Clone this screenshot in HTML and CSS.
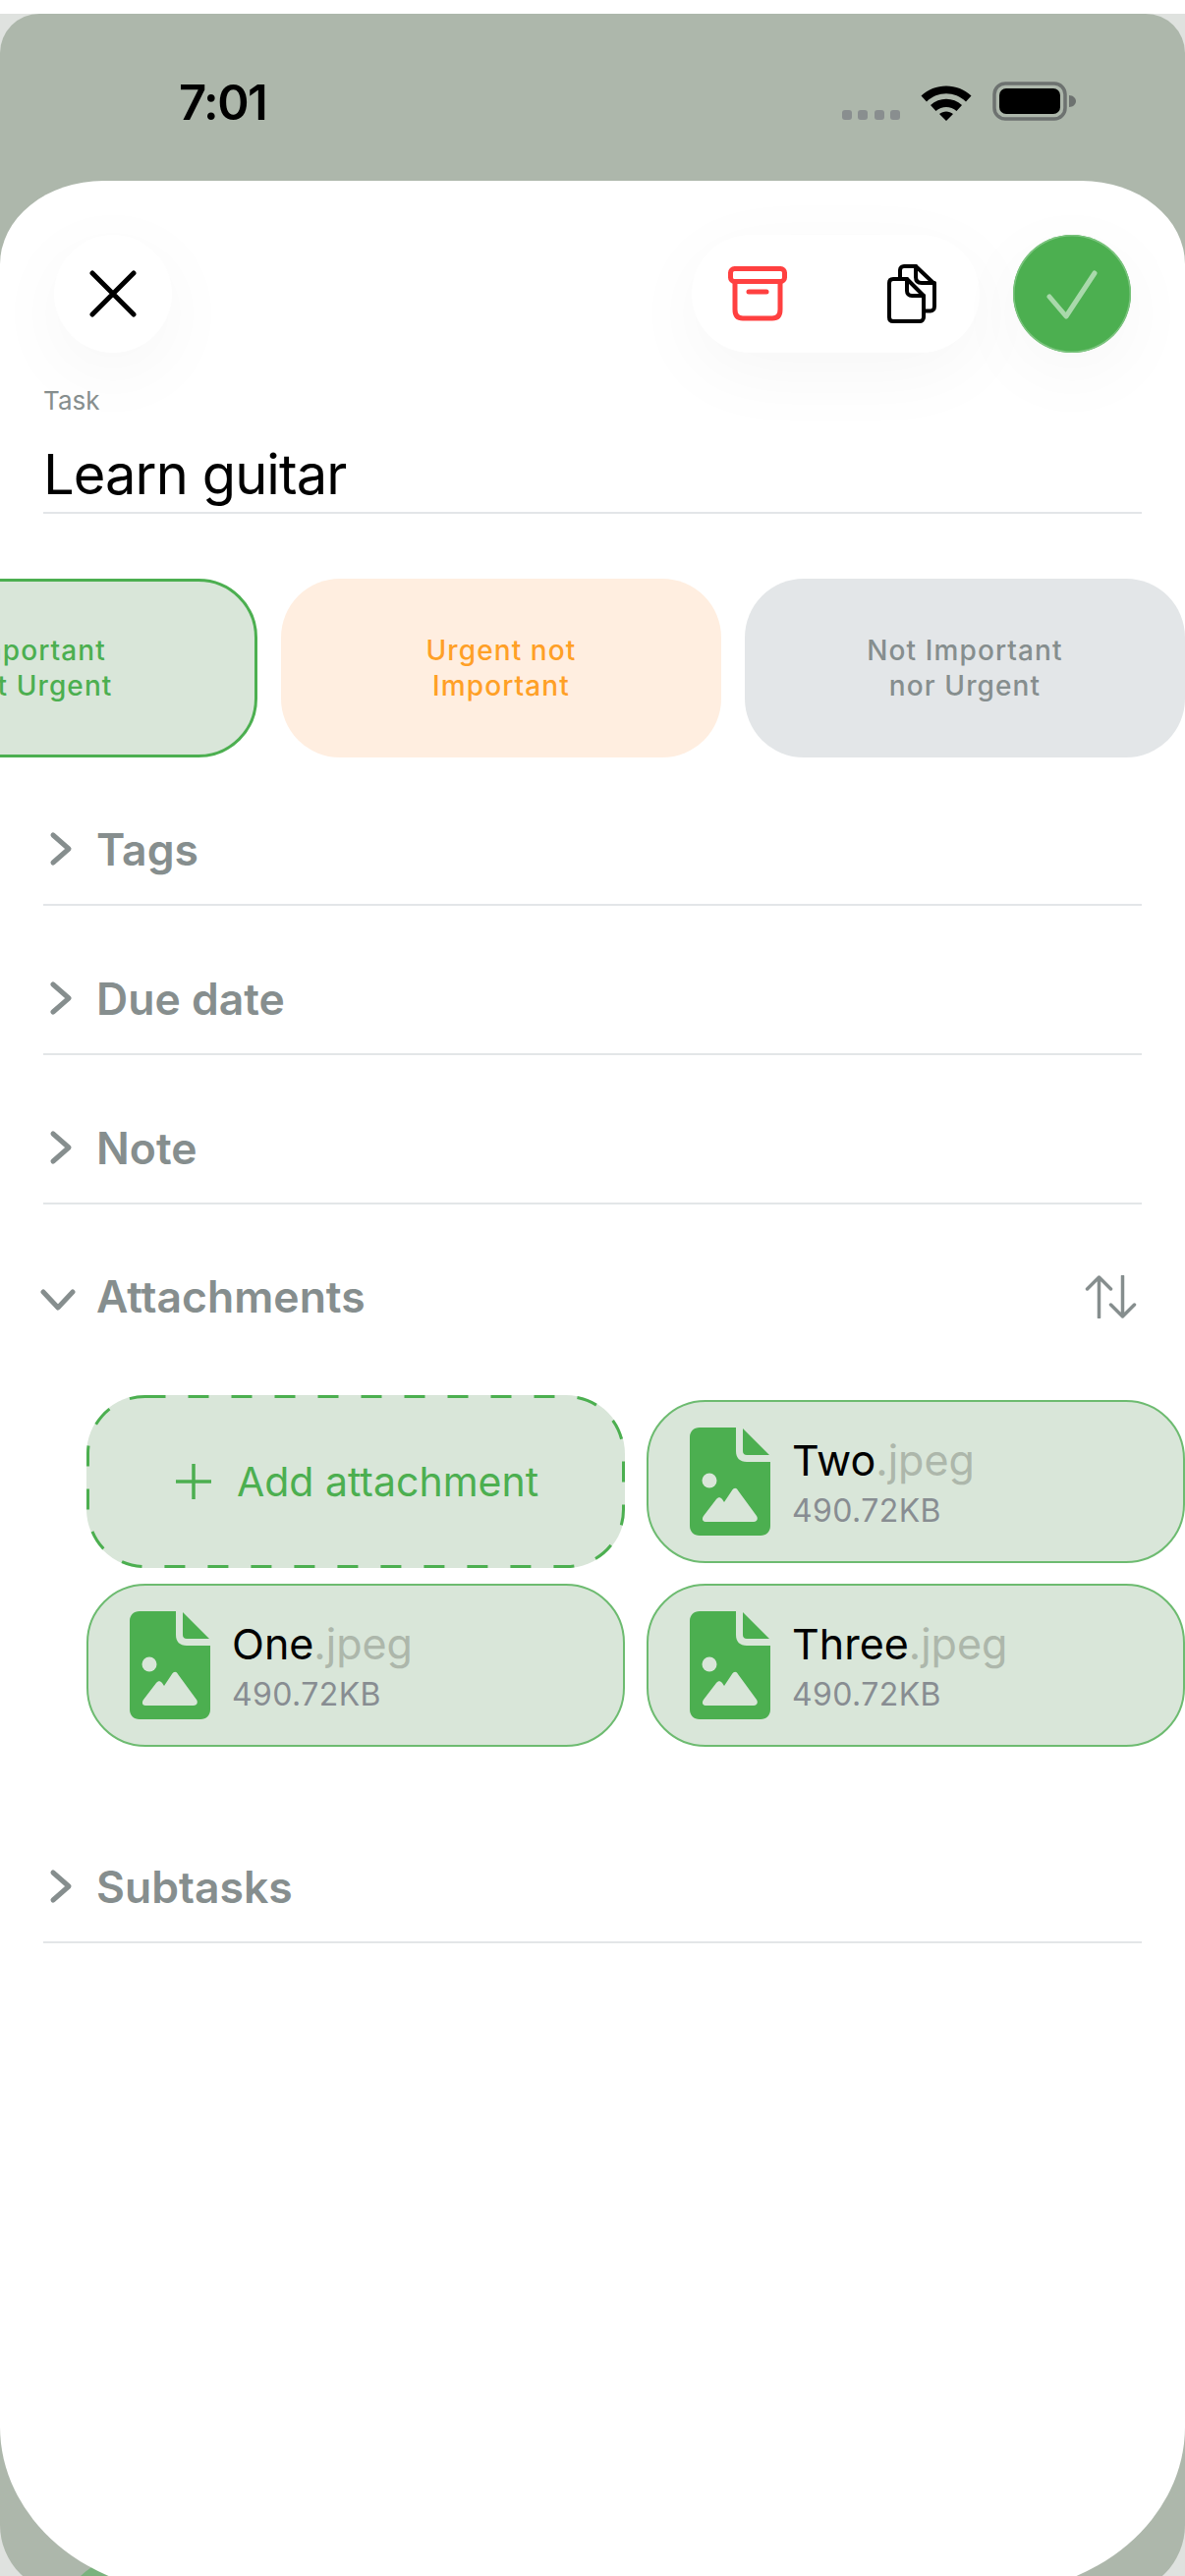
FILE: index.html
```html
<!DOCTYPE html>
<html lang="en">
<head>
<meta charset="utf-8">
<title>Task</title>
<link rel="stylesheet" href="styles.css">
</head>
<body>
<div class="frame">
  <div class="phone">
    <header class="status">
      <span class="time">7:01</span>
      <div class="status-icons">
        <div class="signal"><i></i><i></i><i></i><i></i></div>
        <svg class="wifi" viewBox="0 0 52 40"><path d="M0.5 14.5 C14 1 38 1 51.5 14.5 L46 20.5 C35 9.5 17 9.500 6 20.500 Z M10 24 C19 15.500 33 15.500 42 24 L36.500 30 C30.500 24.500 21.500 24.500 15.500 30 Z M19 33 C23 29.500 29 29.500 33 33 L26 40 Z" fill="#000"/></svg>
        <svg class="battery" viewBox="0 0 85 40"><rect x="2" y="2" width="72" height="36" rx="11" fill="none" stroke="#6d7270" stroke-width="3.500"/><rect x="7" y="7" width="62" height="26" rx="7" fill="#000"/><path d="M78 14 C82 14 85 17 85 20 C85 23 82 26 78 26 Z" fill="#6d7270"/></svg>
      </div>
    </header>
    <div class="peek"></div>
    <main class="sheet">
      <div class="toolbar">
        <button class="round close" aria-label="Close">
          <svg class="icon-x" viewBox="0 0 48 48"><path d="M3 3 L45 45 M45 3 L3 45" stroke="#000" stroke-width="5" stroke-linecap="round" fill="none"/></svg>
        </button>
        <div class="toolbar-right">
          <div class="actions">
            <svg class="icon-archive" viewBox="0 0 60 56"><g fill="none" stroke="#ff4040" stroke-width="5" stroke-linejoin="round" stroke-linecap="round"><rect x="2.500" y="2.500" width="55" height="13" rx="4"/><path d="M7 16 V44 C7 50 10 53 15 53 H45 C50 53 53 50 53 44 V16"/><path d="M21 26 H39"/></g></svg>
            <svg class="icon-copy" viewBox="0 0 50 60"><g fill="none" stroke="#000" stroke-width="4" stroke-linejoin="round" stroke-linecap="round"><path d="M13 14 V6 C13 3.500 15 2 17 2 H29 L48 20 V43 C48 46 46 47.500 44 47.500 H37"/><path d="M29 2 V13 C29 17 31 19 35 19 H48"/><path d="M6 15 H20 L37 32 V54 C37 56.500 35 58 33 58 H6 C3.500 58 2 56.500 2 54 V19 C2 16.500 3.500 15 6 15 Z" fill="#fff"/><path d="M20 15 V27 C20 30 22 32 25 32 H37"/></g></svg>
          </div>
          <button class="round confirm" aria-label="Done">
            <svg class="icon-check" viewBox="0 0 52 50"><path d="M3 27 L20 47 L49 3" stroke="#a9d9ab" stroke-width="5" stroke-linecap="round" stroke-linejoin="round" fill="none"/></svg>
          </button>
        </div>
      </div>

      <div class="field">
        <div class="field-label">Task</div>
        <div class="field-value">Learn guitar</div>
      </div>

      <div class="chips">
        <div class="chip chip-green">Important<br>not Urgent</div>
        <div class="chip chip-orange">Urgent not<br>Important</div>
        <div class="chip chip-grey">Not Important<br>nor Urgent</div>
      </div>

      <div class="row">
        <svg class="chev" viewBox="0 0 24 36"><path d="M4 4 L20 18 L4 32" /></svg>
        <span class="row-title">Tags</span>
      </div>
      <div class="row">
        <svg class="chev" viewBox="0 0 24 36"><path d="M4 4 L20 18 L4 32" /></svg>
        <span class="row-title">Due date</span>
      </div>
      <div class="row">
        <svg class="chev" viewBox="0 0 24 36"><path d="M4 4 L20 18 L4 32" /></svg>
        <span class="row-title">Note</span>
      </div>
      <div class="row row-open">
        <svg class="chev-down" viewBox="0 0 36 22"><path d="M3 3 L18 19 L33 3" /></svg>
        <span class="row-title">Attachments</span>
        <svg class="sort" viewBox="1 0 50 44"><g fill="none" stroke="#868e8e" stroke-width="3.500" stroke-linecap="round" stroke-linejoin="round"><path d="M14 43 V2 M2 14 L14 2 L26 14"/><path d="M38 1 V42 M26 30 L38 42 L50 30"/></g></svg>
      </div>

      <div class="tiles">
        <div class="tile tile-add">
          <svg class="dash" viewBox="0 0 548 176" preserveAspectRatio="none"><rect x="1.500" y="1.500" width="545" height="173" rx="58" fill="none" stroke="#4caf50" stroke-width="3" stroke-dasharray="21 23"/></svg>
          <svg class="plus" viewBox="0 0 36 36"><path d="M18 0 V36 M0 18 H36" stroke="#4caf50" stroke-width="3.500"/></svg>
          <span class="add-label">Add attachment</span>
        </div>
        <div class="tile">
          <svg class="file" viewBox="0 0 82 110"><use href="#file-icon"/></svg>
          <div class="file-text"><div class="file-name">Two<span class="ext">.jpeg</span></div><div class="file-size">490.72KB</div></div>
        </div>
        <div class="tile">
          <svg class="file" viewBox="0 0 82 110"><use href="#file-icon"/></svg>
          <div class="file-text"><div class="file-name">One<span class="ext">.jpeg</span></div><div class="file-size">490.72KB</div></div>
        </div>
        <div class="tile">
          <svg class="file" viewBox="0 0 82 110"><use href="#file-icon"/></svg>
          <div class="file-text"><div class="file-name">Three<span class="ext">.jpeg</span></div><div class="file-size">490.72KB</div></div>
        </div>
      </div>

      <div class="row row-subtasks">
        <svg class="chev" viewBox="0 0 24 36"><path d="M4 4 L20 18 L4 32" /></svg>
        <span class="row-title">Subtasks</span>
      </div>
    </main>
  </div>
</div>
<svg class="defs" width="0" height="0">
  <defs>
    <g id="file-icon">
      <path d="M10 0 H47 V24 C47 31 51 35 58 35 H82 V100 C82 106 78 110 72 110 H10 C4 110 0 106 0 100 V10 C0 4 4 0 10 0 Z" fill="#4caf50"/>
      <path d="M54 1 L81 28 H58 C55.500 28 54 26.500 54 24 Z" fill="#4caf50"/>
      <circle cx="20" cy="54" r="7.500" fill="#d9e6d9"/>
      <path d="M14 90 L27 73 C29 70.500 31 70.500 33 73 L35 76 L43 64 C45 61 47.500 61 49 64 L68 90 C70 93 68 96 65 96 H16 C13 96 12 93 14 90 Z" fill="#d9e6d9"/>
    </g>
  </defs>
</svg>
</body>
</html>
```

FILE: styles.css
```css
* { box-sizing: border-box; }

html, body {
  margin: 0;
  height: 2622px;
  overflow: hidden;
  background: #fff;
  font-family: Inter, "Liberation Sans", sans-serif;
}

.defs { position: absolute; }

.frame {
  margin-top: 14px;
  height: 2626px;
  background: #dfe2df;
}

.phone {
  position: relative;
  display: flex;
  flex-direction: column;
  height: 2626px;
  background: #adb7ab;
  border-radius: 40px 40px 70px 70px;
}

.status {
  height: 170px;
  flex: none;
  display: flex;
  justify-content: space-between;
  align-items: flex-start;
  padding: 69px 111px 0 182px;
}

.time {
  font-size: 49px;
  line-height: 44px;
  font-weight: 600;
  color: #000;
  letter-spacing: -1.5px;
}

.status-icons {
  display: flex;
  align-items: flex-end;
}

.signal {
  display: flex;
  gap: 6.500px;
  margin-bottom: 1px;
  margin-right: 21px;
}

.signal i {
  width: 10px;
  height: 10px;
  border-radius: 3px;
  background: #898e8f;
}

.wifi { width: 52px; height: 40px; display: block; margin-right: 21px; }
.battery { width: 85px; height: 40px; display: block; }

.peek {
  position: absolute;
  left: 63px;
  top: 2589px;
  width: 130px;
  height: 130px;
  border-radius: 50%;
  background: #7ab27d;
}

.sheet {
  position: relative;
  flex: 1;
  background: #fff;
  border-radius: 105px 105px 200px 200px / 85px 85px 170px 170px;
}

.toolbar {
  display: flex;
  justify-content: space-between;
  padding: 55px 55px 0;
}

.toolbar-right {
  display: flex;
  gap: 34px;
}

.round {
  width: 120px;
  height: 120px;
  padding: 0;
  border: 0;
  border-radius: 50%;
  display: flex;
  align-items: center;
  justify-content: center;
  box-shadow: 0 20px 80px rgba(0, 0, 0, 0.04);
}

.close { background: #fff; }
.confirm {
  background: #4caf50;
  box-shadow: inset 0 0 0 1.5px #7cc47f, 0 20px 80px rgba(0, 0, 0, 0.04);
}

.icon-x { width: 48px; height: 48px; }
.icon-check { width: 52px; height: 50px; margin-top: 2px; }

.actions {
  width: 293px;
  height: 120px;
  border-radius: 60px;
  background: #fff;
  box-shadow: 0 20px 80px rgba(0, 0, 0, 0.04);
  display: flex;
  align-items: center;
  padding-left: 37px;
  gap: 102px;
}

.icon-archive { width: 60px; height: 56px; }
.icon-copy { width: 50px; height: 60px; }

.field {
  margin: 33px 44px 0;
  border-bottom: 2px solid #e3e6e8;
  height: 131px;
}

.field-label {
  font-size: 26px;
  line-height: 32px;
  color: #868e8e;
}

.field-value {
  font-size: 56px;
  line-height: 68px;
  margin-top: 25px;
  color: #000;
  letter-spacing: -0.9px;
}

.chips {
  display: flex;
  gap: 24px;
  margin: 66px 0 -1px -186px;
}

.chip {
  flex: none;
  width: 448px;
  height: 182px;
  border-radius: 60px;
  display: flex;
  align-items: center;
  justify-content: center;
  text-align: center;
  font-size: 28px;
  line-height: 36px;
  font-weight: 500;
  letter-spacing: 1.1px;
}

.chip-green { background: #d9e6d9; color: #4caf50; border: 3px solid #4caf50; }
.chip-orange { background: #ffeee0; color: #ffa026; }
.chip-grey { background: #e3e6e8; color: #868e8e; }

.row {
  position: relative;
  height: 152px;
  margin: 0 44px;
  border-bottom: 2px solid #e3e6e8;
  display: flex;
  align-items: flex-end;
  padding-bottom: 31px;
  color: #868e8e;
}

.row-title {
  font-size: 44.5px;
  line-height: 48px;
  font-weight: 600;
  margin-left: 54px;
}

.chev {
  position: absolute;
  left: 6px;
  bottom: 38px;
  width: 24px;
  height: 36px;
}

.chev path, .chev-down path {
  fill: none;
  stroke: #868e8e;
  stroke-width: 5;
  stroke-linecap: round;
  stroke-linejoin: round;
}

.row-open { border-bottom: 0; height: 118px; padding-bottom: 0; }

.chev-down {
  position: absolute;
  left: -3px;
  bottom: 10px;
  width: 36px;
  height: 22px;
}

.sort {
  position: absolute;
  right: 5px;
  bottom: 2px;
  width: 53px;
  height: 44px;
}

.tiles {
  display: grid;
  grid-template-columns: 548px 548px;
  grid-auto-rows: 166px;
  gap: 21px 22px;
  margin: 81px 0 0 88px;
}

.tile {
  position: relative;
  background: #d9e6d9;
  border: 2px solid #6dbb70;
  border-radius: 60px;
  display: flex;
  align-items: center;
  padding-left: 42px;
}

.tile-add {
  margin: -5px 0;
  border: 0;
  justify-content: center;
  padding: 0 0 0 3px;
  gap: 26px;
}

.dash {
  position: absolute;
  inset: 0;
  width: 100%;
  height: 100%;
}

.plus { width: 36px; height: 36px; }

.add-label {
  font-size: 41px;
  color: #4caf50;
}

.file { width: 82px; height: 110px; flex: none; }

.file-text { margin: 3px 0 0 22px; }

.file-name {
  font-size: 43px;
  line-height: 50px;
  color: #000;
}

.ext { color: #adb7ab; }

.file-size {
  font-size: 32px;
  line-height: 40px;
  color: #888d92;
  margin-top: 7px;
  letter-spacing: 0.4px;
}

.row-subtasks { margin-top: 48px; }
```
